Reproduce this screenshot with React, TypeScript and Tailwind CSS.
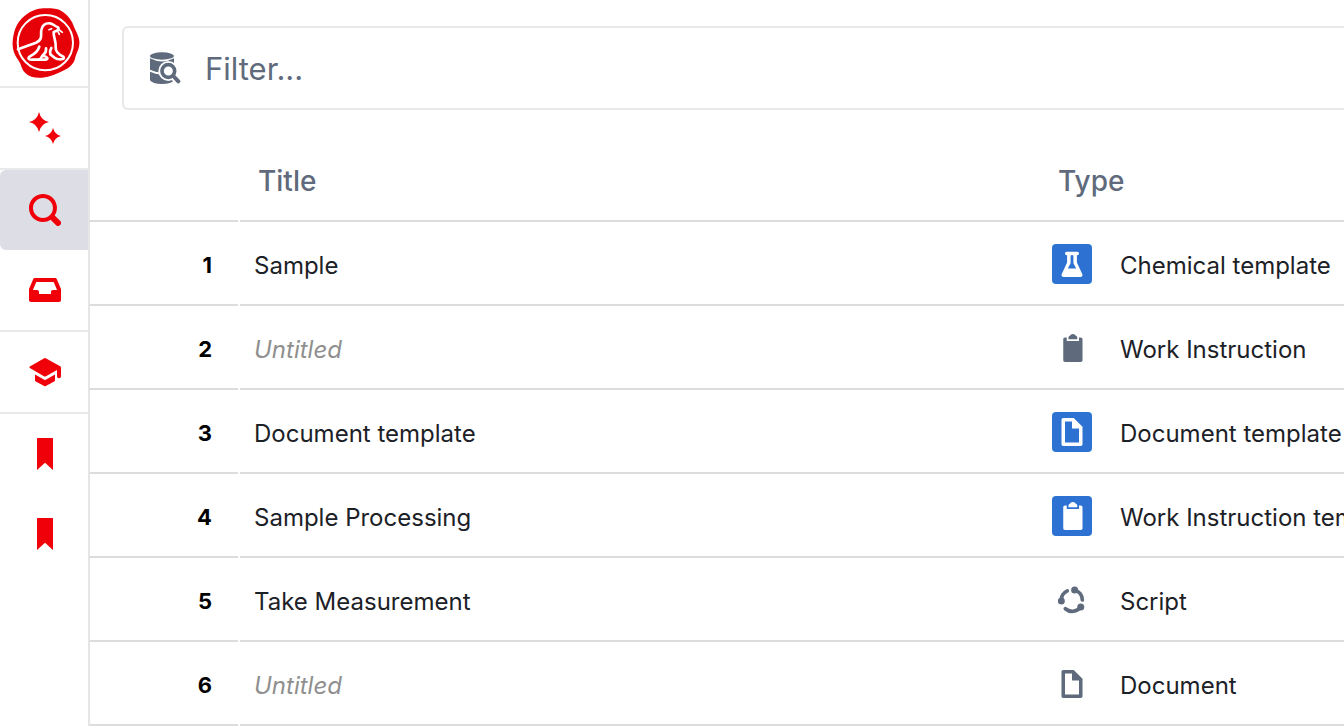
import React from 'react';
import clsx from 'clsx';

interface IconProps {
  className?: string;
}

interface GlyphProps extends IconProps {
  d: string;
}

const PATHS = {
  clean: 'M5 0Q5.9 4.1 10 5Q5.9 5.9 5 10Q4.1 5.9 0 5Q4.1 4.1 5 0zM12 8Q12.8 11.2 16 12Q12.8 12.8 12 16Q11.2 12.8 8 12Q11.2 11.2 12 8z',
  search:
    'M15.55 13.43l-2.67-2.68a6.94 6.94 0 001.11-3.76c0-3.87-3.13-7-7-7s-7 3.13-7 7 3.13 7 7 7c1.39 0 2.68-.42 3.76-1.11l2.68 2.67a1.498 1.498 0 102.12-2.12zm-8.56-1.44c-2.76 0-5-2.24-5-5s2.24-5 5-5 5 2.24 5 5-2.24 5-5 5z',
  inbox:
    'M13.91 2.6c-.16-.36-.51-.61-.92-.61h-10c-.41 0-.77.25-.92.61L0 7.45v5.54c0 .55.45 1 1 1h14c.55 0 1-.45 1-1V7.45L13.91 2.6zm-1.92 5.39c-.55 0-1 .45-1 1v1h-6v-1c0-.55-.45-1-1-1H1.94l1.71-4h8.68l1.71 4h-2.05z',
  learning:
    'M8 1Q8.3 1 8.6 1.2L15.6 5.1Q16 5.4 16 6V10.1a1 1 0 01-2 0V7L8.5 10.1Q8 10.3 7.5 10.1L.4 6Q0 5.6.4 5.2L7.4 1.2Q7.7 1 8 1zM3 9.2L7.4 11.8Q8 12.1 8.6 11.8L13 9.2V12.2Q13 12.5 12.6 12.7L8.4 15Q8 15.2 7.6 15L3.4 12.7Q3 12.5 3 12.2z',
  bookmark: 'M4.3 0h7.4q.3 0 .3.3V16L8 12.4 4 16V.3Q4 0 4.3 0z',
  flask:
    'M5 1h6a1 1 0 010 2h-.2v4.2l3.1 6.6q.4 1.5-1 1.7H3.1q-1.4-.2-1-1.7l3.1-6.6V3H5a1 1 0 010-2zm2.2 2v4.6L5.6 10.5h4.8L8.8 7.6V3z',
  clipboard:
    'M11 2c0-.55-.45-1-1-1h.22C9.88.4 9.24 0 8.5 0S7.12.4 6.78 1H7c-.55 0-1 .45-1 1v1h5V2zm2 0h-1v2H5V2H4c-.55 0-1 .45-1 1v12c0 .55.45 1 1 1h9c.55 0 1-.45 1-1V3c0-.55-.45-1-1-1z',
  document:
    'M9 0H3c-.55 0-1 .45-1 1v14c0 .55.45 1 1 1h10c.55 0 1-.45 1-1V5L9 0zm3 14H4V2h4v4h4v8z',
};

const Glyph: React.FC<GlyphProps> = ({ d, className = 'size-8' }) => (
  <svg viewBox="0 0 16 16" fill="currentColor" fillRule="evenodd" className={className} aria-hidden="true">
    <path d={d} />
  </svg>
);

const ScriptGlyph: React.FC<IconProps> = ({ className = 'size-7' }) => (
  <svg viewBox="0 0 16 16" className={className} aria-hidden="true">
    <g fill="none" stroke="currentColor" strokeWidth="2.1" strokeLinecap="round">
      <path d="M9.5 2.3A6 6 0 0113.9 8" />
      <path d="M13 12A6 6 0 014.2 13" />
      <path d="M1.9 8.6A6 6 0 015.3 2.8" />
    </g>
    <g fill="currentColor">
      <circle cx="9.5" cy="2.3" r="2" />
      <circle cx="13" cy="12" r="2" />
      <circle cx="1.9" cy="8.6" r="2" />
    </g>
  </svg>
);

const DatabaseSearchGlyph: React.FC<IconProps> = ({ className }) => (
  <svg viewBox="102 156 96 96" fill="currentColor" className={className} aria-hidden="true">
    <ellipse cx="141" cy="168" rx="36" ry="11" />
    <path d="M105 175Q141 194 177 175V209Q141 226 105 209z" />
    <path d="M105 215Q141 232 177 215V241Q170 252 141 252Q112 252 105 241z" />
    <circle cx="160" cy="213" r="30" fill="white" />
    <path d="M172 226L191 245" stroke="white" strokeWidth="22" strokeLinecap="round" />
    <circle cx="160" cy="213" r="19" fill="white" stroke="currentColor" strokeWidth="11" />
    <path d="M175 228L190 244" stroke="currentColor" strokeWidth="12" strokeLinecap="round" />
  </svg>
);

/** Red wax seal with a seal sitting on it */
const Logo: React.FC<IconProps> = ({ className }) => (
  <svg viewBox="36 24 204 210" className={className} role="img" aria-label="Home">
    <path
      fill="#e60008"
      d="M130 25C152 24 174 23 190 37C204 47 216 62 222 80C229 98 240 112 238 132C237 150 229 158 225 176C221 192 208 203 192 211C172 222 150 231 126 233C108 235 88 231 76 219C64 209 65 194 55 181C43 165 36 146 38 125C40 105 44 84 56 67C68 50 84 37 104 30C112 27 121 26 130 25Z"
    />
    <circle cx="136" cy="128" r="83" fill="none" stroke="white" strokeWidth="6" />
    <g fill="none" stroke="white" strokeWidth="8" strokeLinecap="round" strokeLinejoin="round">
      <path d="M54 148L108 128C130 118 121 104 124 90C127 74 138 69 150 70C160 71 163 78 174 82C178 86 173 93 161 96C160 112 169 124 167 142C166 156 176 163 190 170C196 177 184 180 172 177C162 174 158 167 151 163C149 156 150 150 154 144" />
      <path d="M118 140C114 154 106 161 90 169C82 175 86 180 96 179H116C124 178 124 168 131 163C138 158 139 152 138 145" />
      <path d="M117 179H138C146 177 142 170 131 168" />
    </g>
    <g stroke="white" strokeWidth="5" strokeLinecap="round">
      <path d="M147 89L155 86M173 93L178 103M178 90L187 97" />
    </g>
  </svg>
);

interface NavItem {
  label: string;
  icon: string;
  active?: boolean;
  divider?: boolean;
}

const NAV_ITEMS: NavItem[] = [
  { label: 'New', icon: PATHS.clean, divider: true },
  { label: 'Search', icon: PATHS.search, active: true },
  { label: 'Inbox', icon: PATHS.inbox, divider: true },
  { label: 'Learn', icon: PATHS.learning, divider: true },
  { label: 'First bookmark', icon: PATHS.bookmark },
  { label: 'Second bookmark', icon: PATHS.bookmark },
];

const Sidebar: React.FC = () => (
  <nav className="w-[90px] shrink-0 border-r-2 border-[#e5e5e7] text-[#f00008]">
    <a href="#home" className="flex h-[88px] items-center justify-center border-b-2 border-[#e9e9eb]">
      <Logo className="ml-[3px] h-[70px] w-[68px]" />
    </a>
    {NAV_ITEMS.map((item) => (
      <div key={item.label} className={clsx(item.divider && 'border-b-2 border-[#e9e9eb]')}>
        <button
          type="button"
          aria-label={item.label}
          className={clsx(
            'flex h-20 w-full items-center justify-center pl-[2px]',
            item.active && 'rounded-l-md bg-[#dcdde5]'
          )}
        >
          <Glyph d={item.icon} />
        </button>
      </div>
    ))}
  </nav>
);

type RowKind = 'flask' | 'clipboard' | 'document' | 'script';

interface Row {
  title?: string;
  type: string;
  kind: RowKind;
  template?: boolean;
}

const ROWS: Row[] = [
  { title: 'Sample', type: 'Chemical template', kind: 'flask', template: true },
  { type: 'Work Instruction', kind: 'clipboard' },
  { title: 'Document template', type: 'Document template', kind: 'document', template: true },
  { title: 'Sample Processing', type: 'Work Instruction template', kind: 'clipboard', template: true },
  { title: 'Take Measurement', type: 'Script', kind: 'script' },
  { type: 'Document', kind: 'document' },
];

const TypeIcon: React.FC<{ kind: RowKind; template?: boolean }> = ({ kind, template }) => (
  <span
    className={clsx(
      'flex size-10 shrink-0 items-center justify-center rounded',
      template ? 'bg-[#2d72d2] text-white' : 'text-[#5f6b7c]'
    )}
  >
    {kind === 'script' ? <ScriptGlyph /> : <Glyph d={PATHS[kind]} className="size-7" />}
  </span>
);

const ResultsTable: React.FC = () => (
  <table className="w-full table-fixed border-separate border-spacing-0 text-left text-2xl text-[#1c2127]">
    <colgroup>
      <col className="w-[148px]" />
      <col className="w-[2px]" />
      <col className="w-[800px]" />
      <col />
    </colgroup>
    <thead>
      <tr className="h-[84px] text-[28px] text-[#5f6b7c]">
        <td className="border-b-2 border-[#dcdcdd]" />
        <td className="p-0" />
        <th scope="col" className="border-b-2 border-[#dcdcdd] pt-[6px] pl-[18px] font-medium">
          Title
        </th>
        <th scope="col" className="border-b-2 border-[#dcdcdd] pt-[6px] pl-[18px] font-medium">
          Type
        </th>
      </tr>
    </thead>
    <tbody>
      {ROWS.map((row, index) => (
        <tr key={index} className="h-[84px]">
          <th
            scope="row"
            className="border-b-2 border-[#dcdcdd] pt-[6px] pr-[26px] text-right text-[22px] font-bold text-black"
          >
            {index + 1}
          </th>
          <td className="p-0" />
          <td className="border-b-2 border-[#dcdcdd] pt-[6px] pl-[14px]">
            {row.title ?? <em className="text-[#8f8f8f]">Untitled</em>}
          </td>
          <td className="overflow-hidden border-b-2 border-[#dcdcdd] pt-[2px] pl-3 whitespace-nowrap">
            <div className="flex items-center gap-7">
              <TypeIcon kind={row.kind} template={row.template} />
              <span className="pt-1">{row.type}</span>
            </div>
          </td>
        </tr>
      ))}
    </tbody>
  </table>
);

const App: React.FC = () => (
  <div className="flex min-h-screen overflow-hidden bg-white font-['Inter','Liberation_Sans',sans-serif]">
    <Sidebar />
    <main className="min-w-0 flex-1">
      <label className="mt-[26px] mb-7 ml-8 flex h-[84px] items-center gap-6 rounded-l-md border-2 border-r-0 border-[#e8e8ea] pl-[25px] text-[#5f6b7c]">
        <DatabaseSearchGlyph className="size-8 shrink-0" />
        <input
          type="text"
          aria-label="Filter"
          placeholder="Filter..."
          className="min-w-0 flex-1 bg-transparent pt-[2px] text-[31px] outline-none placeholder:text-[#5f6b7c]"
        />
      </label>
      <ResultsTable />
    </main>
  </div>
);

export default App;
